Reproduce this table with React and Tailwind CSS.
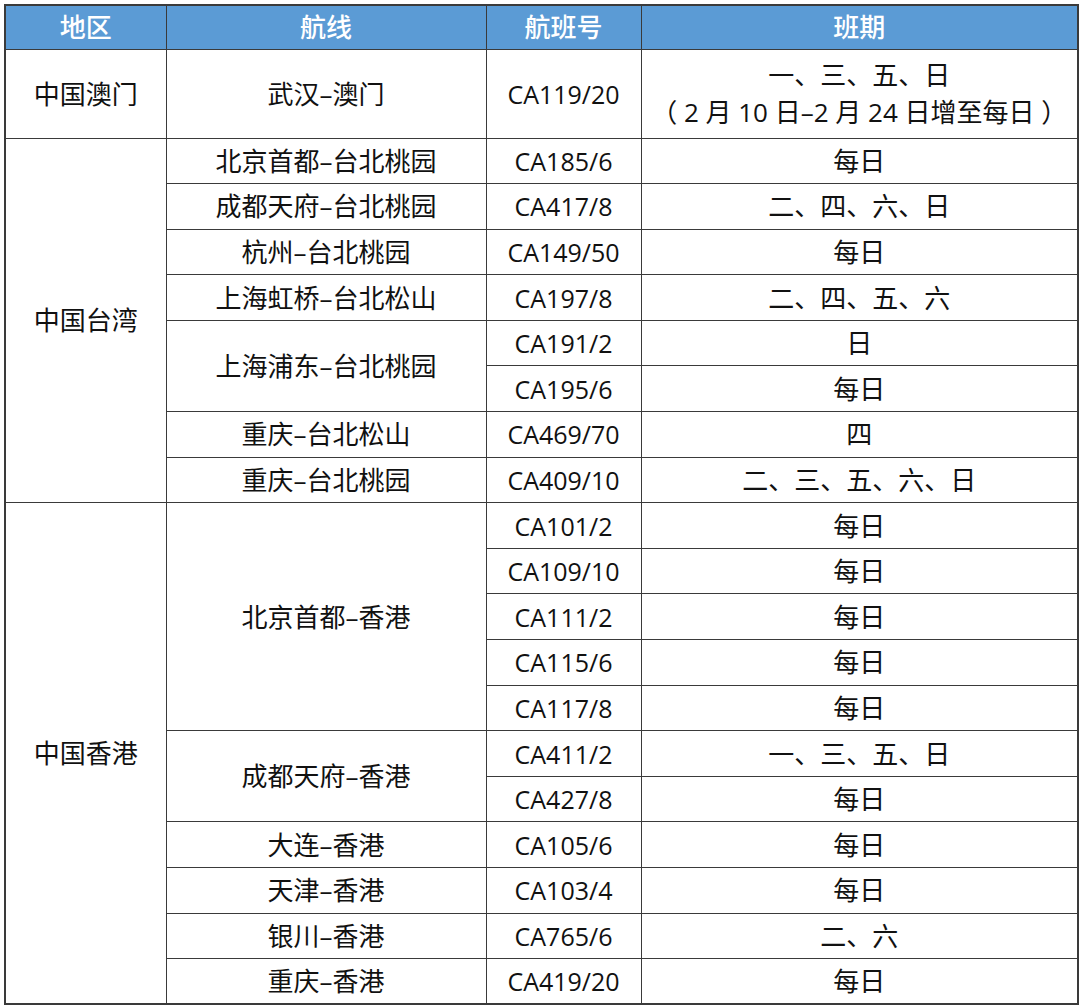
import React from 'react';

const ROWS = [
  { region: '中国澳门', regionSpan: 1, route: '武汉–澳门', routeSpan: 1, flight: 'CA119/20', days: ['一、三、五、日', '（ 2 月 10 日–2 月 24 日增至每日 ）'], tall: true },
  { region: '中国台湾', regionSpan: 8, route: '北京首都–台北桃园', routeSpan: 1, flight: 'CA185/6', days: ['每日'] },
  { route: '成都天府–台北桃园', routeSpan: 1, flight: 'CA417/8', days: ['二、四、六、日'] },
  { route: '杭州–台北桃园', routeSpan: 1, flight: 'CA149/50', days: ['每日'] },
  { route: '上海虹桥–台北松山', routeSpan: 1, flight: 'CA197/8', days: ['二、四、五、六'] },
  { route: '上海浦东–台北桃园', routeSpan: 2, flight: 'CA191/2', days: ['日'] },
  { flight: 'CA195/6', days: ['每日'] },
  { route: '重庆–台北松山', routeSpan: 1, flight: 'CA469/70', days: ['四'] },
  { route: '重庆–台北桃园', routeSpan: 1, flight: 'CA409/10', days: ['二、三、五、六、日'] },
  { region: '中国香港', regionSpan: 11, route: '北京首都–香港', routeSpan: 5, flight: 'CA101/2', days: ['每日'] },
  { flight: 'CA109/10', days: ['每日'] },
  { flight: 'CA111/2', days: ['每日'] },
  { flight: 'CA115/6', days: ['每日'] },
  { flight: 'CA117/8', days: ['每日'] },
  { route: '成都天府–香港', routeSpan: 2, flight: 'CA411/2', days: ['一、三、五、日'] },
  { flight: 'CA427/8', days: ['每日'] },
  { route: '大连–香港', routeSpan: 1, flight: 'CA105/6', days: ['每日'] },
  { route: '天津–香港', routeSpan: 1, flight: 'CA103/4', days: ['每日'] },
  { route: '银川–香港', routeSpan: 1, flight: 'CA765/6', days: ['二、六'] },
  { route: '重庆–香港', routeSpan: 1, flight: 'CA419/20', days: ['每日'] },
];

const cell = 'border-[1.5px] border-[#3a3a3a] text-center align-middle p-0 whitespace-nowrap';

export default function App() {
  return (
    <div className="bg-white w-[1080px] h-[1007px] pt-[4px] pl-[4px] font-['Open_Sans','Noto_Sans_CJK_SC',sans-serif] text-[#111] text-[26px] leading-[30px]">
      <table className="table-fixed border-collapse border-2 border-[#3a3a3a] w-[1073px]">
        <colgroup>
          <col className="w-[161px]" />
          <col className="w-[320px]" />
          <col className="w-[155px]" />
          <col className="w-[437px]" />
        </colgroup>
        <thead>
          <tr className="h-[44px] bg-[#5b9bd5] text-white">
            <th className={`${cell} font-medium`}>地区</th>
            <th className={`${cell} font-medium`}>航线</th>
            <th className={`${cell} font-medium`}>航班号</th>
            <th className={`${cell} font-medium`}>班期</th>
          </tr>
        </thead>
        <tbody>
          {ROWS.map((r, i) => (
            <tr key={i} className={r.tall ? 'h-[89px]' : 'h-[45.6px]'}>
              {r.region && (
                <td rowSpan={r.regionSpan} className={cell}>{r.region}</td>
              )}
              {r.route && (
                <td rowSpan={r.routeSpan} className={cell}>{r.route}</td>
              )}
              <td className={`${cell} text-[25px]`}>{r.flight}</td>
              <td className={cell}>
                {r.days.map((d, j) => (
                  <div key={j} className={r.days.length > 1 ? 'leading-[37px]' : ''}>{d}</div>
                ))}
              </td>
            </tr>
          ))}
        </tbody>
      </table>
    </div>
  );
}
